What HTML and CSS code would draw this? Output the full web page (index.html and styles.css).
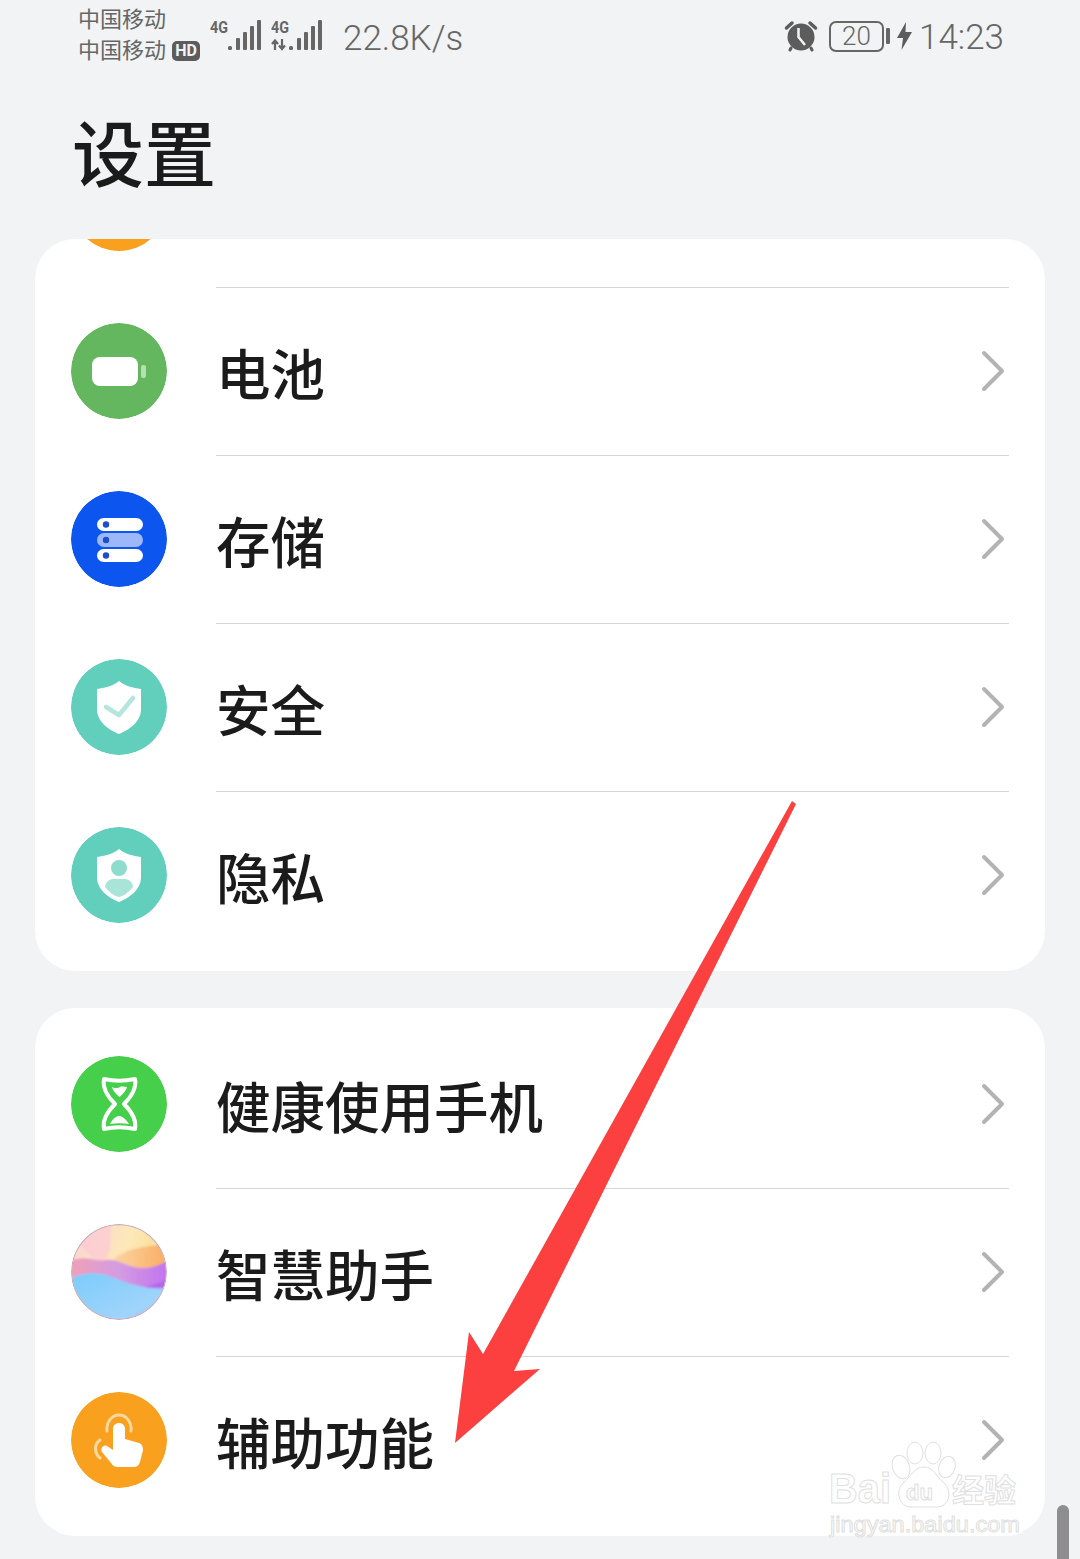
FILE: index.html

```html
<!DOCTYPE html>
<html lang="zh-CN">
<head>
  <meta charset="UTF-8" />
  <title>设置</title>
  <link rel="stylesheet" href="styles.css">
</head>
<body>

<div class="page">

  <!-- Status bar -->
  <header class="status">
    <div class="carriers">
      <div>中国移动</div>
      <div class="carrier-2">中国移动<span class="hd">HD</span></div>
    </div>
    <svg class="signal" width="52" height="38" viewBox="0 -4 52 38">
      <text class="net" x="0" y="14" textLength="18" lengthAdjust="spacingAndGlyphs">4G</text>
      <rect x="18" y="27" width="4" height="4" rx="1.500"/>
      <rect x="26" y="19" width="4" height="12" rx="1"/>
      <rect x="33" y="13" width="4" height="18" rx="1"/>
      <rect x="40" y="7" width="4" height="24" rx="1"/>
      <rect x="47" y="1" width="4" height="30" rx="1"/>
    </svg>
    <svg class="signal signal-2" width="52" height="38" viewBox="0 -4 52 38">
      <text class="net" x="0" y="14" textLength="18" lengthAdjust="spacingAndGlyphs">4G</text>
      <path d="M4 31v-9M1 25L4 21.500L7 25M11 20v10M8 26.500L11 30L14 26.500" fill="none" stroke="#666" stroke-width="2.200"/>
      <rect x="18" y="27" width="4" height="4" rx="1.500"/>
      <rect x="26" y="19" width="4" height="12" rx="1"/>
      <rect x="33" y="13" width="4" height="18" rx="1"/>
      <rect x="40" y="7" width="4" height="24" rx="1"/>
      <rect x="47" y="1" width="4" height="30" rx="1"/>
    </svg>
    <div class="speed">22.8K/s</div>
    <div class="status-right">
      <svg class="alarm" width="34" height="32" viewBox="0 0 34 32">
        <circle cx="17" cy="17" r="13.500" fill="#5c5c5c"/>
        <path d="M2.500 8L8 3M31.500 8L26 3" stroke="#5c5c5c" stroke-width="3.500" stroke-linecap="round"/>
        <path d="M7 28L6 30M27 28L28 30" stroke="#5c5c5c" stroke-width="3" stroke-linecap="round"/>
        <path d="M14.500 8V17L21 25" fill="none" stroke="#f1f3f5" stroke-width="2.500"/>
      </svg>
      <div class="battery"><span>20</span></div>
      <div class="battery-nub"></div>
      <svg class="bolt" width="15" height="28" viewBox="0 0 15 28">
        <path d="M9 0L0 16H6L4.500 28L15 10H8.500Z" fill="#5c5c5c"/>
      </svg>
      <div class="clock">14:23</div>
    </div>
  </header>

  <h1 class="title">设置</h1>

  <section class="card">
    <div class="row row-cut">
      <div class="icon icon-cut"></div>
      <div class="row-body"></div>
    </div>

    <div class="row">
      <svg class="icon" viewBox="0 0 96 96">
        <circle cx="48" cy="48" r="48" fill="#65b75f"/>
        <rect x="21" y="34" width="46" height="29" rx="8" fill="#fff"/>
        <rect x="70" y="42" width="5" height="13" rx="2" fill="#b6e0b0"/>
      </svg>
      <div class="row-body">
        <span class="label">电池</span>
        <svg class="chev" width="24" height="42" viewBox="0 0 24 42"><path d="M3 3L21 21L3 39"/></svg>
      </div>
    </div>

    <div class="row">
      <svg class="icon" viewBox="0 0 96 96">
        <circle cx="48" cy="48" r="48" fill="#0d55ef"/>
        <rect x="26" y="27" width="46" height="13" rx="6.500" fill="#fff"/>
        <rect x="26" y="42" width="46" height="14" rx="7" fill="#9db8fa"/>
        <rect x="26" y="58" width="46" height="13" rx="6.500" fill="#fff"/>
        <circle cx="35" cy="33.500" r="3.200" fill="#1f4fc4"/>
        <circle cx="35" cy="49" r="3.200" fill="#1f4fc4"/>
        <circle cx="35" cy="64.500" r="3.200" fill="#1f4fc4"/>
      </svg>
      <div class="row-body">
        <span class="label">存储</span>
        <svg class="chev" width="24" height="42" viewBox="0 0 24 42"><path d="M3 3L21 21L3 39"/></svg>
      </div>
    </div>

    <div class="row">
      <svg class="icon" viewBox="0 0 96 96">
        <circle cx="48" cy="48" r="48" fill="#62cfbc"/>
        <path d="M48 22C54 27 62 29 70 30V50C70 63 58 71 48 75C38 71 26 63 26 50V30C34 29 42 27 48 22Z" fill="#fff"/>
        <path d="M35 48L48 56L62 39" fill="none" stroke="#b5e5dc" stroke-width="4.500" stroke-linecap="round" stroke-linejoin="round"/>
      </svg>
      <div class="row-body">
        <span class="label">安全</span>
        <svg class="chev" width="24" height="42" viewBox="0 0 24 42"><path d="M3 3L21 21L3 39"/></svg>
      </div>
    </div>

    <div class="row row-last">
      <svg class="icon" viewBox="0 0 96 96">
        <circle cx="48" cy="48" r="48" fill="#62cfbc"/>
        <path d="M48 22C54 27 62 29 70 30V50C70 63 58 71 48 75C38 71 26 63 26 50V30C34 29 42 27 48 22Z" fill="#fff"/>
        <circle cx="48" cy="41" r="8" fill="#8edccd"/>
        <path d="M42 52H54C58 52 62 56 62 60C58 65 53 69 48 70C43 69 38 65 34 60C34 56 38 52 42 52Z" fill="#a9e4d9"/>
      </svg>
      <div class="row-body">
        <span class="label">隐私</span>
        <svg class="chev" width="24" height="42" viewBox="0 0 24 42"><path d="M3 3L21 21L3 39"/></svg>
      </div>
    </div>
  </section>

  <section class="card card-2">
    <div class="row">
      <svg class="icon" viewBox="0 0 96 96">
        <circle cx="48" cy="48" r="48" fill="#45cf4a"/>
        <path d="M33 23C42 25 54 25 64 23C66 33 60 41 53 48C60 55 66 63 64 73C54 71 42 71 33 73C31 63 37 55 44 48C37 41 31 33 33 23Z" fill="none" stroke="#fff" stroke-width="4" stroke-linejoin="round"/>
        <path d="M41 31C45 33 47 32 49 31C51 30 54 31 56 31C55 35 51 39 48.500 41C46 39 42 35 41 31Z" fill="#fff"/>
        <path d="M39 68C42 62 46 60 48 60C51 60 55 63 58 68C52 67 45 67 39 68Z" fill="#fff"/>
      </svg>
      <div class="row-body">
        <span class="label">健康使用手机</span>
        <svg class="chev" width="24" height="42" viewBox="0 0 24 42"><path d="M3 3L21 21L3 39"/></svg>
      </div>
    </div>

    <div class="row">
      <svg class="icon" viewBox="0 0 96 96">
        <defs>
          <clipPath id="orb"><circle cx="48" cy="48" r="47"/></clipPath>
          <filter id="soft"><feGaussianBlur stdDeviation="1.200"/></filter>
          <linearGradient id="orb-base" x1="0" y1="0" x2="1" y2="0.300">
            <stop offset="0" stop-color="#fbd3d8"/>
            <stop offset="0.600" stop-color="#fde8b8"/>
            <stop offset="1" stop-color="#fbd98f"/>
          </linearGradient>
          <linearGradient id="orb-orange" x1="0" y1="0" x2="1" y2="0">
            <stop offset="0" stop-color="#fcd7a6"/>
            <stop offset="1" stop-color="#f9a95e"/>
          </linearGradient>
          <linearGradient id="orb-mid" x1="0" y1="0" x2="1" y2="0">
            <stop offset="0" stop-color="#f3a0b4"/>
            <stop offset="0.500" stop-color="#d49ce2"/>
            <stop offset="1" stop-color="#c070f0"/>
          </linearGradient>
          <linearGradient id="orb-blue" x1="0" y1="0" x2="1" y2="1">
            <stop offset="0" stop-color="#7accfc"/>
            <stop offset="0.700" stop-color="#a0d4fb"/>
            <stop offset="1" stop-color="#b4aef2"/>
          </linearGradient>
        </defs>
        <g clip-path="url(#orb)">
          <g filter="url(#soft)">
            <rect x="-4" y="-4" width="104" height="104" fill="url(#orb-base)"/>
            <path d="M-4 10C10 20 18 36 30 36C38 36 40 28 40 -4H-4Z" fill="#fcc9d4" opacity="0.700"/>
            <path d="M40 38C50 26 70 22 100 20V54H40Z" fill="url(#orb-orange)"/>
            <path d="M-4 38C14 30 24 38 34 36C48 34 56 44 72 44C82 44 90 40 100 36V70H-4Z" fill="url(#orb-mid)"/>
            <path d="M60 66C74 64 86 60 100 54V68H60Z" fill="#b060e8" opacity="0.800"/>
            <path d="M-4 56C12 48 26 48 38 52C54 58 70 66 100 64V100H-4Z" fill="url(#orb-blue)"/>
          </g>
        </g>
        <circle cx="48" cy="48" r="47.300" fill="none" stroke="#c9a9b8" stroke-width="1.200"/>
      </svg>
      <div class="row-body">
        <span class="label">智慧助手</span>
        <svg class="chev" width="24" height="42" viewBox="0 0 24 42"><path d="M3 3L21 21L3 39"/></svg>
      </div>
    </div>

    <div class="row row-last">
      <svg class="icon" viewBox="0 0 96 96">
        <circle cx="48" cy="48" r="48" fill="#f9a11f"/>
        <path d="M36 39C35 30 41 23 48 23C55 23 61 30 60 39" fill="none" stroke="#fcd9a0" stroke-width="3" stroke-linecap="round"/>
        <path d="M29 48C23 52 23 61 29 66" fill="none" stroke="#fcd9a0" stroke-width="3" stroke-linecap="round"/>
        <path d="M42 37C42 29 54 29 54 37V47L68 51C71 52 72 55 72 58L69 70C68 73 66 75 63 75H47C44 75 42 74 40 71L31 60C29 57 32 52 36 54L42 58Z" fill="#fff"/>
      </svg>
      <div class="row-body">
        <span class="label">辅助功能</span>
        <svg class="chev" width="24" height="42" viewBox="0 0 24 42"><path d="M3 3L21 21L3 39"/></svg>
      </div>
    </div>
  </section>

  <!-- Baidu watermark, over the card -->
  <svg class="watermark" width="200" height="110" viewBox="0 0 200 110">
    <text class="wm-big" x="2" y="63" textLength="62" lengthAdjust="spacingAndGlyphs">Bai</text>
    <text class="wm-cn" x="125" y="62">经验</text>
    <text class="wm-url" x="3" y="92" textLength="190" lengthAdjust="spacingAndGlyphs">jingyan.baidu.com</text>
    <g class="wm-paw">
      <ellipse cx="74" cy="27" rx="8.500" ry="12" transform="rotate(-20 74 27)"/>
      <ellipse cx="88" cy="13" rx="8" ry="11"/>
      <ellipse cx="106" cy="13" rx="8" ry="11"/>
      <ellipse cx="120" cy="27" rx="8" ry="11" transform="rotate(20 120 27)"/>
      <path d="M97 27C107 27 109 37 117 43C126 51 122 67 110 67H84C72 67 68 51 76 43C84 37 87 27 97 27Z"/>
    </g>
    <text class="wm-du" x="79" y="60">du</text>
  </svg>

  <!-- Red annotation arrow -->
  <svg class="arrow" width="360" height="660" viewBox="0 0 360 660">
    <path d="M356 1L360 4L78 571L104 569L19 643L33 532L47 554Z" fill="#fc3f3f"/>
  </svg>

  <div class="scrollbar"></div>
</div>

</body>
</html>
```

FILE: styles.css

```css
/* Reset and base styles */
* {
  box-sizing: border-box;
  margin: 0;
  padding: 0;
}

body {
  font-family: "Noto Sans CJK SC", "Noto Sans", sans-serif;
  background-color: #f1f3f5;
  color: #1b1b1b;
  overflow: hidden;
}

.page {
  position: relative;
  width: 1080px;
  height: 1559px;
  overflow: hidden;
}

/* Status bar */
.status {
  display: flex;
  align-items: flex-start;
  height: 75px;
  padding: 0 76px 0 78px;
  color: #666;
}

.carriers {
  width: 132px;
  padding-top: 2px;
  font-size: 22px;
  line-height: 31px;
  white-space: nowrap;
}

.hd {
  display: inline-block;
  width: 28px;
  height: 20px;
  margin-left: 6px;
  border-radius: 5px;
  background: #5c5c5c;
  color: #f1f3f5;
  font-family: "Roboto", sans-serif;
  font-size: 16px;
  font-weight: 700;
  line-height: 20px;
  text-align: center;
  vertical-align: 2px;
}

.signal {
  flex: none;
  margin-top: 15px;
  fill: #666;
}

.signal-2 {
  margin-left: 9px;
}

.net {
  font-family: "Roboto", sans-serif;
  font-size: 17px;
  font-weight: 700;
  stroke: none;
}

.speed {
  margin-left: 20px;
  padding-top: 18px;
  font-family: "Roboto", sans-serif;
  font-size: 35px;
  font-weight: 300;
  line-height: 42px;
}

.status-right {
  display: flex;
  align-items: center;
  height: 32px;
  margin-top: 20px;
  margin-left: auto;
}

.alarm {
  margin-left: 1px;
}

.battery {
  width: 55px;
  height: 31px;
  margin-left: 11px;
  border: 2px solid #666;
  border-radius: 7px;
  font-family: "Roboto", sans-serif;
  font-size: 26px;
  font-weight: 300;
  line-height: 27px;
  text-align: center;
}

.battery-nub {
  width: 4px;
  height: 16px;
  margin-left: 2px;
  border-radius: 1px;
  background: #666;
}

.bolt {
  margin-left: 7px;
}

.clock {
  margin-left: 7px;
  padding-top: 3px;
  font-family: "Roboto", sans-serif;
  font-size: 35px;
  font-weight: 300;
  line-height: 34px;
}

/* Title */
.title {
  height: 164px;
  padding-left: 72px;
  font-size: 72px;
  font-weight: 500;
  line-height: 150px;
}

/* Cards and rows */
.card {
  width: 1010px;
  margin-left: 35px;
  border-radius: 40px;
  background: #fff;
  overflow: hidden;
}

.card-2 {
  margin-top: 37px;
  padding-top: 13px;
}

.row {
  display: flex;
  align-items: center;
  height: 168px;
  padding-left: 36px;
}

.row-last {
  height: 179px;
  padding-bottom: 11px;
}

.row-last .row-body {
  border-bottom: none;
}

.row-cut {
  height: 49px;
  align-items: flex-start;
}

.icon {
  flex: none;
  width: 96px;
  height: 96px;
  margin-top: -2px;
  border-radius: 50%;
}

.icon-cut {
  margin-top: -84px;
  background: #f9a11f;
}

.row-body {
  display: flex;
  flex: 1;
  align-items: center;
  justify-content: space-between;
  height: 100%;
  margin: 0 36px 0 49px;
  padding-right: 4px;
  border-bottom: 1px solid #d6d6d6;
}

.label {
  font-size: 54.500px;
  font-weight: 500;
  line-height: 60px;
}

.chev {
  margin-top: -2px;
  fill: none;
  stroke: #b3b3b3;
  stroke-width: 4;
  stroke-linecap: round;
  stroke-linejoin: round;
}

/* Overlays */
.watermark {
  position: absolute;
  left: 827px;
  top: 1440px;
  overflow: visible;
}

.wm-big,
.wm-cn,
.wm-url,
.wm-du {
  fill: #fff;
  stroke: #e0e0e0;
  stroke-width: 1;
  font-family: "Liberation Sans", sans-serif;
}

.wm-big {
  font-size: 42px;
  font-weight: 700;
}

.wm-cn {
  font-family: "Noto Sans CJK SC", sans-serif;
  font-size: 32px;
  font-weight: 700;
}

.wm-url {
  font-size: 22px;
}

.wm-du {
  font-size: 22px;
  font-weight: 700;
}

.wm-paw {
  fill: #fff;
  stroke: #e0e0e0;
  stroke-width: 1;
}

.arrow {
  position: absolute;
  left: 436px;
  top: 800px;
}

.scrollbar {
  position: absolute;
  left: 1057px;
  top: 1505px;
  width: 12px;
  height: 60px;
  border-radius: 6px;
  background: #8e8e90;
}
```
